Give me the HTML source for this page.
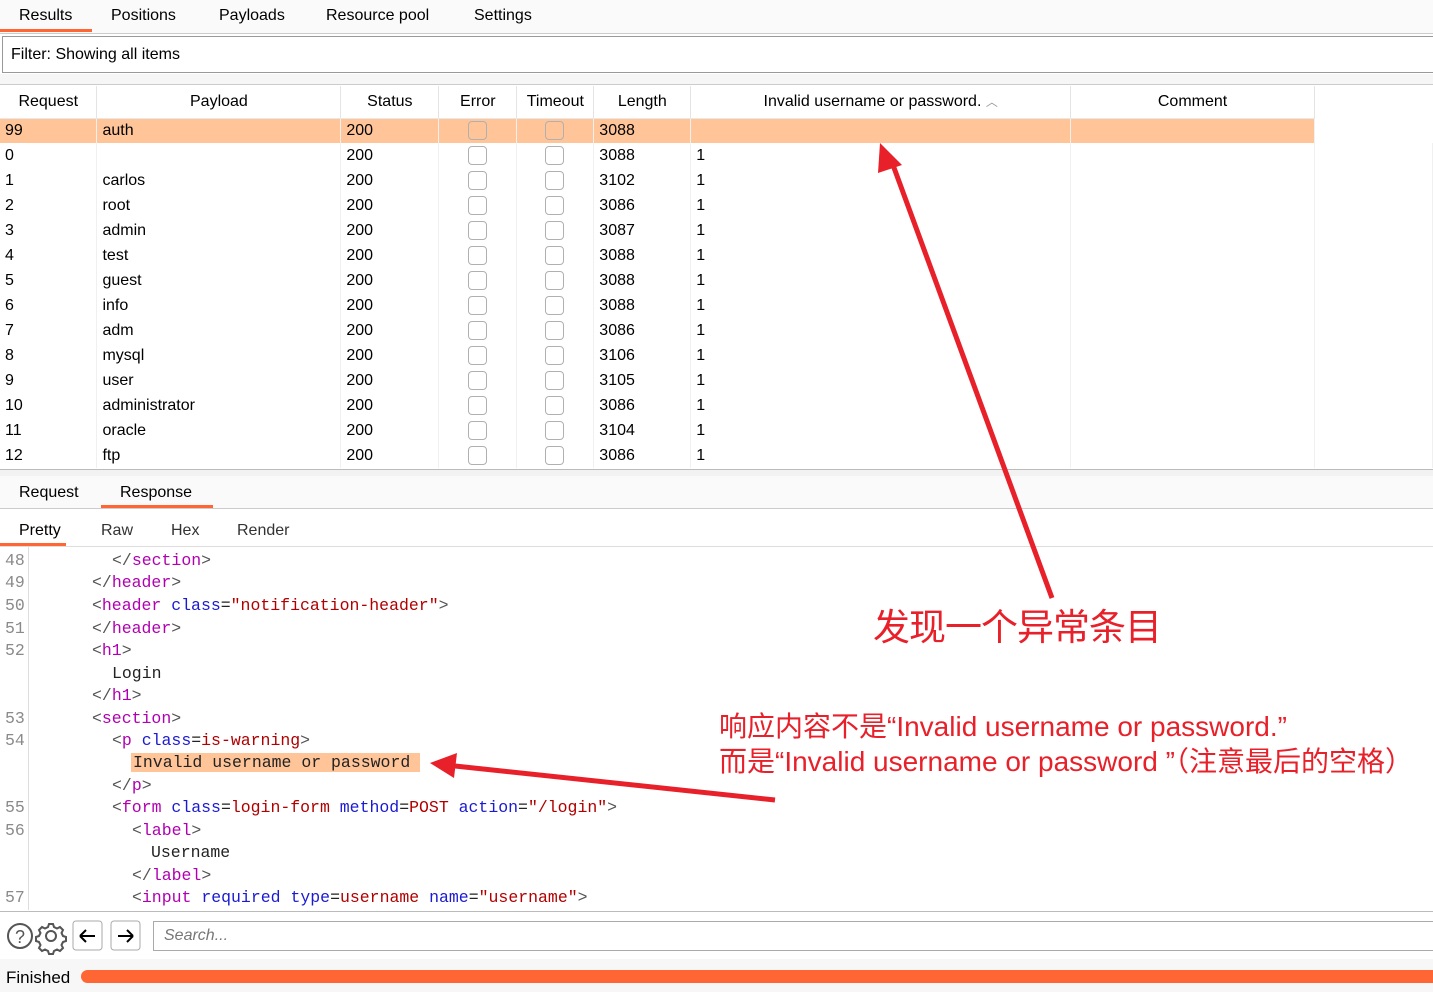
<!DOCTYPE html>
<html><head><meta charset="utf-8"><style>
*{box-sizing:border-box;margin:0;padding:0}
body{width:1433px;height:992px;overflow:hidden;background:#fff;font-family:"Liberation Sans","Noto Sans CJK SC",sans-serif;font-size:16px;color:#000;position:relative}
.abs{position:absolute}
.tab{position:absolute;top:7px;font-size:16px}
table{border-collapse:collapse;position:absolute;left:0;top:86px;table-layout:fixed}
th{height:32px;font-weight:normal;border-right:1px solid #e4e4e4;border-bottom:1px solid #e8e8e8;font-size:16px}
td{height:25px;padding-left:5px;font-size:16px;border-right:1px solid #f0f0f0}
tr.sel td{background:#ffc599}
.cb{display:inline-block;width:19px;height:19px;border:1px solid #b0b0b0;border-radius:4px;vertical-align:middle;margin-left:25px}
.code{position:absolute;left:0;top:549px;width:1433px;font-family:"Liberation Mono",monospace;font-size:16.5px}
.ln{position:absolute;left:5px;color:#8a8a8a}
.cl{position:absolute;white-space:pre;color:#222}
.t{color:#b000b0}.a{color:#1a1ad0}.v{color:#b00000}.g{color:#555}
</style></head><body>
<div class="abs" style="left:0;top:0;width:1433px;height:34px;background:#fafafa;border-bottom:1px solid #ccc"></div>
<div class="tab" style="left:19px">Results</div>
<div class="abs" style="left:0;top:29px;width:92px;height:3px;background:#ff6633"></div>
<div class="tab" style="left:111px">Positions</div>
<div class="tab" style="left:219px">Payloads</div>
<div class="tab" style="left:326px">Resource pool</div>
<div class="tab" style="left:474px">Settings</div>
<div class="abs" style="left:2px;top:36px;width:1440px;height:37px;border:1px solid #999;background:#fff;padding:9px 8px;font-size:16px">Filter: Showing all items</div>
<div class="abs" style="left:0;top:74px;width:1433px;height:11px;background:#f6f6f6"></div>
<div class="abs" style="left:0;top:84px;width:1433px;height:1px;background:#ccc"></div>
<table>
<colgroup><col style="width:97px"><col style="width:244px"><col style="width:98px"><col style="width:78px"><col style="width:77px"><col style="width:97px"><col style="width:380px"><col style="width:244px"><col style="width:118px"></colgroup>
<tr><th>Request</th><th>Payload</th><th>Status</th><th>Error</th><th>Timeout</th><th>Length</th><th>Invalid username or password. <span style="color:#999;font-size:12px">︿</span></th><th>Comment</th><th style="border:none"></th></tr>
<tr class="sel"><td>99</td><td>auth</td><td>200</td><td style="padding:0"><span class="cb" style="margin-left:29px"></span></td><td style="padding:0"><span class="cb" style="margin-left:28px"></span></td><td>3088</td><td></td><td></td><td style="background:#fff;border:none"></td></tr>
<tr><td>0</td><td></td><td>200</td><td style="padding:0"><span class="cb" style="margin-left:29px"></span></td><td style="padding:0"><span class="cb" style="margin-left:28px"></span></td><td>3088</td><td>1</td><td></td><td></td></tr>
<tr><td>1</td><td>carlos</td><td>200</td><td style="padding:0"><span class="cb" style="margin-left:29px"></span></td><td style="padding:0"><span class="cb" style="margin-left:28px"></span></td><td>3102</td><td>1</td><td></td><td></td></tr>
<tr><td>2</td><td>root</td><td>200</td><td style="padding:0"><span class="cb" style="margin-left:29px"></span></td><td style="padding:0"><span class="cb" style="margin-left:28px"></span></td><td>3086</td><td>1</td><td></td><td></td></tr>
<tr><td>3</td><td>admin</td><td>200</td><td style="padding:0"><span class="cb" style="margin-left:29px"></span></td><td style="padding:0"><span class="cb" style="margin-left:28px"></span></td><td>3087</td><td>1</td><td></td><td></td></tr>
<tr><td>4</td><td>test</td><td>200</td><td style="padding:0"><span class="cb" style="margin-left:29px"></span></td><td style="padding:0"><span class="cb" style="margin-left:28px"></span></td><td>3088</td><td>1</td><td></td><td></td></tr>
<tr><td>5</td><td>guest</td><td>200</td><td style="padding:0"><span class="cb" style="margin-left:29px"></span></td><td style="padding:0"><span class="cb" style="margin-left:28px"></span></td><td>3088</td><td>1</td><td></td><td></td></tr>
<tr><td>6</td><td>info</td><td>200</td><td style="padding:0"><span class="cb" style="margin-left:29px"></span></td><td style="padding:0"><span class="cb" style="margin-left:28px"></span></td><td>3088</td><td>1</td><td></td><td></td></tr>
<tr><td>7</td><td>adm</td><td>200</td><td style="padding:0"><span class="cb" style="margin-left:29px"></span></td><td style="padding:0"><span class="cb" style="margin-left:28px"></span></td><td>3086</td><td>1</td><td></td><td></td></tr>
<tr><td>8</td><td>mysql</td><td>200</td><td style="padding:0"><span class="cb" style="margin-left:29px"></span></td><td style="padding:0"><span class="cb" style="margin-left:28px"></span></td><td>3106</td><td>1</td><td></td><td></td></tr>
<tr><td>9</td><td>user</td><td>200</td><td style="padding:0"><span class="cb" style="margin-left:29px"></span></td><td style="padding:0"><span class="cb" style="margin-left:28px"></span></td><td>3105</td><td>1</td><td></td><td></td></tr>
<tr><td>10</td><td>administrator</td><td>200</td><td style="padding:0"><span class="cb" style="margin-left:29px"></span></td><td style="padding:0"><span class="cb" style="margin-left:28px"></span></td><td>3086</td><td>1</td><td></td><td></td></tr>
<tr><td>11</td><td>oracle</td><td>200</td><td style="padding:0"><span class="cb" style="margin-left:29px"></span></td><td style="padding:0"><span class="cb" style="margin-left:28px"></span></td><td>3104</td><td>1</td><td></td><td></td></tr>
<tr><td>12</td><td>ftp</td><td>200</td><td style="padding:0"><span class="cb" style="margin-left:29px"></span></td><td style="padding:0"><span class="cb" style="margin-left:28px"></span></td><td>3086</td><td>1</td><td></td><td></td></tr>
</table>
<div class="abs" style="left:0;top:469px;width:1433px;height:7px;background:#f2f2f2;border-top:1px solid #bbb"></div>
<div class="abs" style="left:0;top:476px;width:1433px;height:33px;background:#fafafa;border-bottom:1px solid #ccc"></div>
<div class="abs" style="left:19px;top:484px">Request</div>
<div class="abs" style="left:120px;top:484px">Response</div>
<div class="abs" style="left:101px;top:505px;width:112px;height:3px;background:#ff6633"></div>
<div class="abs" style="left:19px;top:522px">Pretty</div>
<div class="abs" style="left:101px;top:522px;color:#333">Raw</div>
<div class="abs" style="left:171px;top:522px;color:#333">Hex</div>
<div class="abs" style="left:237px;top:522px;color:#333">Render</div>
<div class="abs" style="left:0;top:543px;width:66px;height:3px;background:#ff6633"></div>
<div class="abs" style="left:0;top:546px;width:1433px;height:1px;background:#ddd"></div>
<div class="abs" style="left:28px;top:547px;width:1px;height:363px;background:#ddd"></div>
<div class="code">
<div class="ln" style="top:2px">48</div><div class="cl" style="left:112px;top:2px"><span class="g">&lt;/</span><span class="t">section</span><span class="g">&gt;</span></div>
<div class="ln" style="top:24px">49</div><div class="cl" style="left:92px;top:24px"><span class="g">&lt;/</span><span class="t">header</span><span class="g">&gt;</span></div>
<div class="ln" style="top:47px">50</div><div class="cl" style="left:92px;top:47px"><span class="g">&lt;</span><span class="t">header</span> <span class="a">class</span>=<span class="v">"notification-header"</span><span class="g">&gt;</span></div>
<div class="ln" style="top:70px">51</div><div class="cl" style="left:92px;top:70px"><span class="g">&lt;/</span><span class="t">header</span><span class="g">&gt;</span></div>
<div class="ln" style="top:92px">52</div><div class="cl" style="left:92px;top:92px"><span class="g">&lt;</span><span class="t">h1</span><span class="g">&gt;</span></div>
<div class="cl" style="left:112px;top:115px">Login</div>
<div class="cl" style="left:92px;top:137px"><span class="g">&lt;/</span><span class="t">h1</span><span class="g">&gt;</span></div>
<div class="ln" style="top:160px">53</div><div class="cl" style="left:92px;top:160px"><span class="g">&lt;</span><span class="t">section</span><span class="g">&gt;</span></div>
<div class="ln" style="top:182px">54</div><div class="cl" style="left:112px;top:182px"><span class="g">&lt;</span><span class="t">p</span> <span class="a">class</span>=<span class="v">is-warning</span><span class="g">&gt;</span></div>
<div class="cl" style="left:131px;top:204px;background:#ffc599;padding:0 10px 0 2px">Invalid username or password</div>
<div class="cl" style="left:112px;top:227px"><span class="g">&lt;/</span><span class="t">p</span><span class="g">&gt;</span></div>
<div class="ln" style="top:249px">55</div><div class="cl" style="left:112px;top:249px"><span class="g">&lt;</span><span class="t">form</span> <span class="a">class</span>=<span class="v">login-form</span> <span class="a">method</span>=<span class="v">POST</span> <span class="a">action</span>=<span class="v">"/login"</span><span class="g">&gt;</span></div>
<div class="ln" style="top:272px">56</div><div class="cl" style="left:132px;top:272px"><span class="g">&lt;</span><span class="t">label</span><span class="g">&gt;</span></div>
<div class="cl" style="left:151px;top:294px">Username</div>
<div class="cl" style="left:132px;top:317px"><span class="g">&lt;/</span><span class="t">label</span><span class="g">&gt;</span></div>
<div class="ln" style="top:339px">57</div><div class="cl" style="left:132px;top:339px"><span class="g">&lt;</span><span class="t">input</span> <span class="a">required</span> <span class="a">type</span>=<span class="v">username</span> <span class="a">name</span>=<span class="v">"username"</span><span class="g">&gt;</span></div>
</div>
<div class="abs" style="left:0;top:911px;width:1433px;height:1px;background:#bbb"></div>
<svg class="abs" style="left:0;top:916px" width="150" height="40">
<circle cx="20" cy="20" r="12" fill="none" stroke="#555" stroke-width="2"/>
<text x="20" y="27" font-size="18" text-anchor="middle" fill="#555" font-family="Liberation Sans">?</text>
<g transform="translate(51,20)" fill="none" stroke="#555" stroke-width="2"><circle r="5"/><path d="M-2,-12h4l1,3 3,1.5 3-1.5 3,3-1.5,3 1.5,3 3,1v4l-3,1-1.5,3 1.5,3-3,3-3-1.5-3,1.5-1,3h-4l-1-3-3-1.5-3,1.5-3-3 1.5-3-1.5-3-3-1v-4l3-1 1.5-3-1.5-3 3-3 3,1.5 3-1.5z"/></g>
<rect x="73" y="5" width="29" height="29" rx="3" fill="#fff" stroke="#aaa"/>
<path d="M80,20h15M80,20l6-6M80,20l6,6" stroke="#000" stroke-width="2" fill="none"/>
<rect x="111" y="5" width="29" height="29" rx="3" fill="#fff" stroke="#aaa"/>
<path d="M118,20h15M133,20l-6-6M133,20l-6,6" stroke="#000" stroke-width="2" fill="none"/>
</svg>
<div class="abs" style="left:153px;top:921px;width:1300px;height:30px;border:1px solid #aaa;padding:5px 10px;font-style:italic;color:#777;font-size:16px">Search...</div>
<div class="abs" style="left:0;top:959px;width:1433px;height:33px;background:#f7f7f7"></div>
<div class="abs" style="left:6px;top:968px;font-size:17px">Finished</div>
<div class="abs" style="left:81px;top:970px;width:1370px;height:13px;border-radius:7px;background:#ff6633"></div>
<svg class="abs" style="left:0;top:0" width="1433" height="992">
<path d="M1052,598 L893,165" stroke="#e8202a" stroke-width="5" fill="none"/>
<polygon points="880,143 878,173 902,165" fill="#e8202a"/>
<path d="M775,800 L455,766" stroke="#e8202a" stroke-width="5" fill="none"/>
<polygon points="430,763 457,753 454,778" fill="#e8202a"/>
</svg>
<div class="abs" style="left:873px;top:601px;color:#e8202a;font-size:37px;font-family:'Noto Sans CJK SC',sans-serif;line-height:46px;letter-spacing:-1px">发现一个异常条目</div>
<div class="abs" style="left:719px;top:709px;color:#e8202a;font-size:28px;line-height:35px;white-space:nowrap;font-family:'Liberation Sans','Noto Sans CJK SC',sans-serif">响应内容不是“Invalid username or password.”<br>而是“Invalid username or password ”（注意最后的空格）</div>
</body></html>
